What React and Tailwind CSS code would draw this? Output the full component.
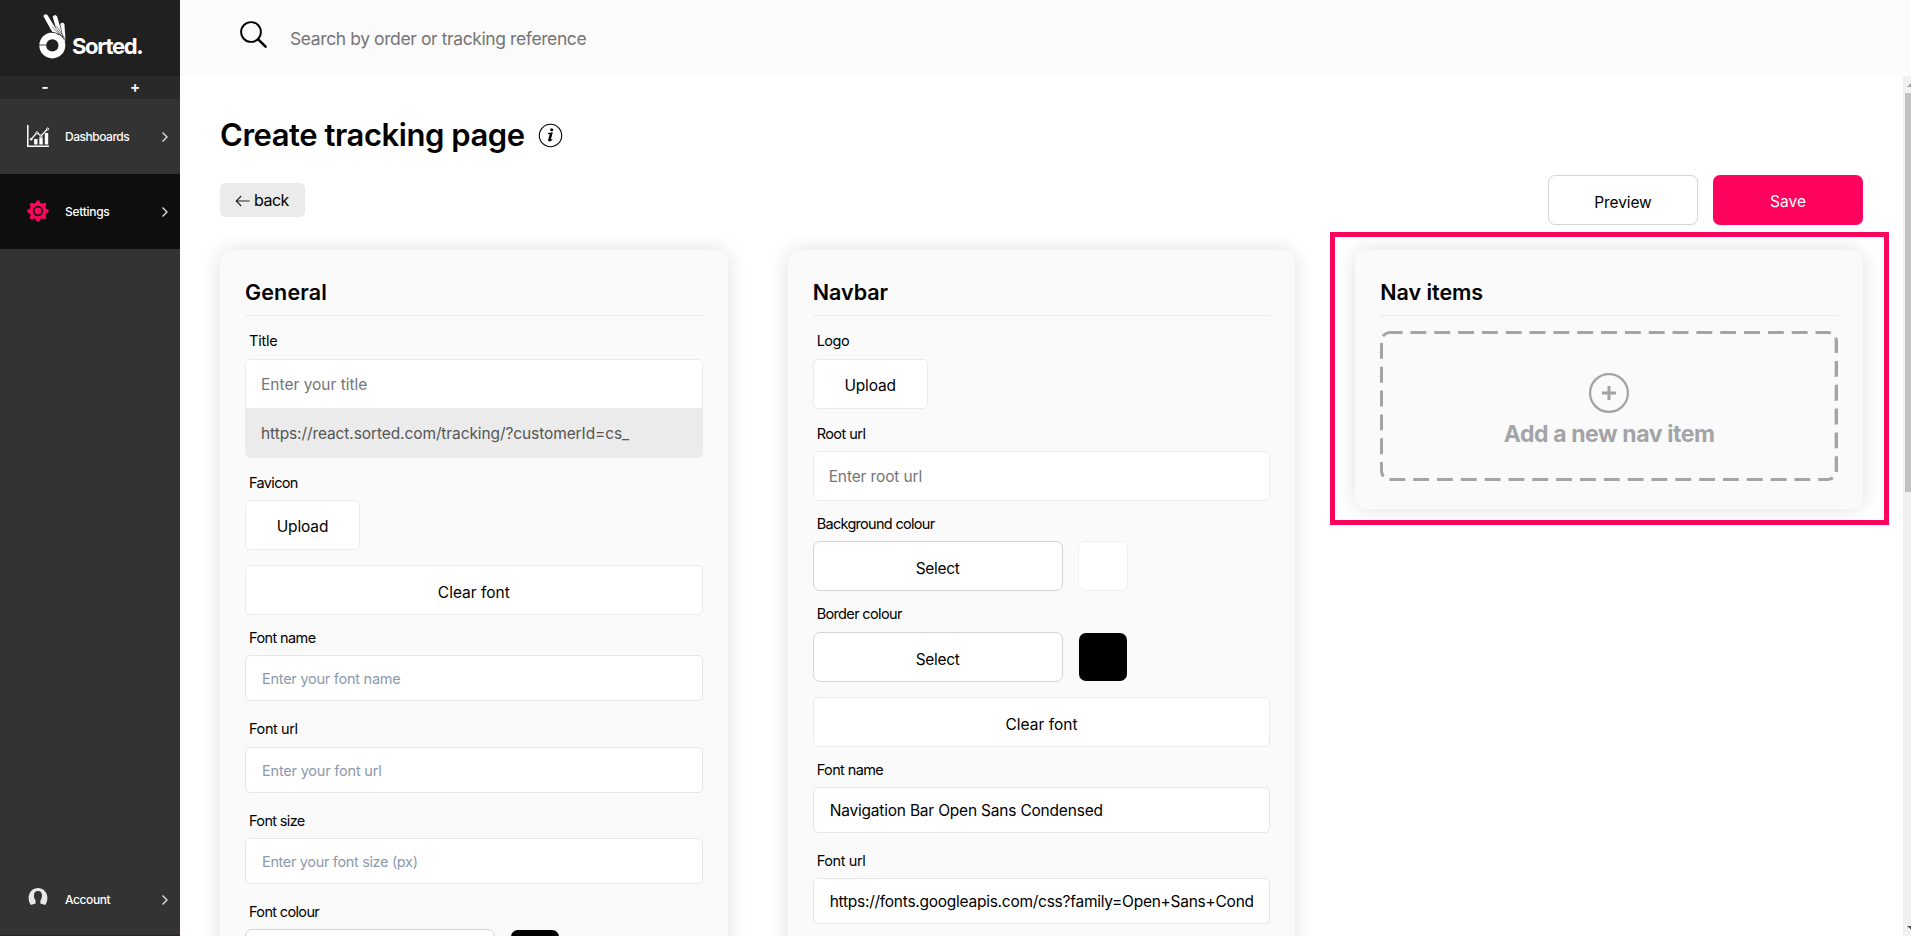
import React from "react";

function Chevron() {
  return (
    <svg className="ml-auto mr-[11px]" width="8" height="12" viewBox="0 0 8 12" fill="none" stroke="#e6e6e6" strokeWidth="1.3">
      <path d="M1.5 1.5 6 6 1.5 10.5" />
    </svg>
  );
}

function NavRow({ icon, label, className, textClass }) {
  return (
    <a className={`flex h-[75px] items-center pl-[27px] ${className}`}>
      <span className="flex w-[38px] items-center pb-[2px]">{icon}</span>
      <span className={`text-[12px] font-medium leading-[18px] text-white ${textClass}`}>{label}</span>
      <Chevron />
    </a>
  );
}

function Logo() {
  return (
    <div className="flex h-[76px] bg-[#202020] pl-[38px] pt-[13px]">
      <svg width="30" height="48" viewBox="0 0 30 48">
        <g fill="#fff">
          <path d="M5.6 3.5C5 1.6 8.2.2 9.6 2.2L16.5 13.5 22 21 14.8 19.4 12.4 15.8Z" />
          <path d="M14.8 4.2C15 1.8 18.6 1.6 19.2 3.8L22.2 14 24.6 24 18 15Z" />
          <path d="M22.4 11.5C22.6 9.2 26 9.2 26.4 11.3L27.4 25 27 30 24.6 22Z" />
        </g>
        <circle cx="14.3" cy="32.4" r="9.6" fill="none" stroke="#fff" strokeWidth="6.8" />
        <path d="M0 32H8M13 19.3 17.5 19.8 21 22" stroke="#202020" strokeWidth=".8" fill="none" />
        <path d="M14 13.5 27 27M18.5 13 27.2 26" stroke="#202020" strokeWidth=".6" fill="none" />
      </svg>
      <span className="ml-[4px] mt-[19px] whitespace-nowrap text-[22px] font-bold leading-[28px] tracking-[-1.3px] text-white">Sorted.</span>
    </div>
  );
}

function ChartIcon() {
  return (
    <svg width="22" height="22" viewBox="0 0 22 22" fill="none" stroke="#fff">
      <path d="M.8 0V21.2H22" strokeWidth="1.5" />
      <path d="M8.8 19.5V14M14 19.5V12.5M19.5 19.5V8" strokeWidth="3.4" />
      <path d="M4 14.5 10 7.5 14 11 20.5 4" strokeWidth="1.2" />
      <circle cx="4.2" cy="14.3" r="1" fill="#fff" strokeWidth=".6" />
      <circle cx="10" cy="7.8" r="1.1" fill="#333" strokeWidth=".9" />
      <circle cx="14" cy="11" r="1.1" fill="#333" strokeWidth=".9" />
      <circle cx="20.6" cy="4" r="1.1" fill="#333" strokeWidth=".9" />
    </svg>
  );
}

function GearIcon() {
  return (
    <svg width="22" height="22" viewBox="0 0 24 24">
      <g stroke="#ff045e" strokeWidth="4.4" strokeLinecap="round">
        <path d="M12 2.4V21.6M2.4 12H21.6M5.2 5.2 18.8 18.8M18.8 5.2 5.2 18.8" />
      </g>
      <circle cx="12" cy="12" r="7.4" fill="#0e0e0e" stroke="#ff045e" strokeWidth="3.6" />
      <circle cx="12" cy="12" r="3.7" fill="#ff045e" />
    </svg>
  );
}

function AccountIcon() {
  return (
    <svg className="mb-[3px] ml-px" width="20" height="18" viewBox="0 0 20 18">
      <path
        fill="#e8e8e8"
        d="M2.8 17C-.6 12 .2 6 3.4 2.8 7 -.9 13 -.9 16.6 2.8 19.8 6 20.6 12 17.2 17L12.4 15.6V12.6C15 9 14.8 3 10 3S5 9 7.6 12.6V15.6Z"
      />
    </svg>
  );
}

function Sidebar() {
  return (
    <aside className="flex w-[180px] shrink-0 flex-col border-b border-[#292226] bg-[#333]">
      <Logo />
      <div className="grid h-[23px] grid-cols-2 bg-[#292929] text-center text-[15px] font-bold leading-[21px] text-white">
        <span>-</span>
        <span>+</span>
      </div>
      <NavRow icon={<ChartIcon />} label="Dashboards" textClass="tracking-[-0.48px]" />
      <NavRow icon={<GearIcon />} label="Settings" className="bg-[#0e0e0e]" textClass="tracking-[-0.28px]" />
      <NavRow icon={<AccountIcon />} label="Account" className="mt-auto pt-[4px]" textClass="tracking-[-0.4px]" />
    </aside>
  );
}

function Card({ title, titleClass, className, children }) {
  return (
    <section className={`rounded-[12px] bg-[#fafafa] px-[25px] shadow-[0_0_20px_rgba(0,0,0,0.13)] ${className}`}>
      <h2 className={`h-[66px] border-b border-[#e9eaf2] pt-[27px] text-[21.5px] font-semibold leading-[30px] ${titleClass}`}>{title}</h2>
      {children}
    </section>
  );
}

function Label({ className, children }) {
  return <label className={`flex items-end pl-[4px] text-[14.5px] leading-[20px] ${className}`}>{children}</label>;
}

function FontInput({ className, ...props }) {
  return (
    <input
      readOnly
      className={`block h-[46px] w-full rounded-[5px] border border-[#e6e6e6] bg-white px-[16px] placeholder:text-[#8b9aac] ${className}`}
      {...props}
    />
  );
}

function Button({ className, children }) {
  return (
    <button className={`flex h-[50px] items-center justify-center border bg-white text-[15.5px] ${className}`}>{children}</button>
  );
}

function ColourRow({ swatch }) {
  return (
    <div className="flex items-center">
      <Button className="w-[250px] rounded-[7px] border-[#d4d4d4] pt-[5px] tracking-[-0.3px]">Select</Button>
      <span className={`rounded-[7px] ${swatch}`} />
    </div>
  );
}

export default function App() {
  return (
    <div className="flex h-[936px] w-[1911px] overflow-hidden bg-white font-['Inter',sans-serif] text-black">
      <Sidebar />
      <div className="flex min-w-0 flex-1 flex-col">
        <header className="flex h-[76px] shrink-0 items-center bg-[#fbfbfb] pl-[60px]">
          <svg className="mb-[6px]" width="28" height="28" viewBox="0 0 28 28" fill="none" stroke="#000">
            <circle cx="11" cy="11" r="9.9" strokeWidth="1.9" />
            <path d="M18.2 18.4 25.6 25.6" strokeWidth="2.6" strokeLinecap="round" />
          </svg>
          <input
            readOnly
            placeholder="Search by order or tracking reference"
            className="ml-[22px] w-[500px] pt-[2px] text-[17.5px] tracking-[-0.4px] placeholder:text-[#757575]"
          />
        </header>
        <div className="flex min-h-0 flex-1">
          <main className="min-w-0 flex-1 overflow-hidden px-[40px]">
            <div className="flex h-[107px] items-start pt-[38px]">
              <h1 className="text-[31px] font-semibold leading-[42px] tracking-[-0.45px]">Create tracking page</h1>
              <svg className="ml-[13px] mt-[9px]" width="25" height="25" viewBox="0 0 25 25">
                <circle cx="12.5" cy="12.5" r="11.2" fill="none" stroke="#000" strokeWidth="1.1" />
                <circle cx="13.7" cy="6.8" r="1.5" />
                <path d="M10 10.6 14 10 11.8 17.6Q11.8 18.4 14.2 16.4" fill="none" stroke="#000" strokeWidth="1.2" />
                <path d="M13 10.4 11 18" stroke="#000" strokeWidth="2.2" />
              </svg>
            </div>
            <div className="flex h-[67px] items-start justify-between">
              <button className="flex h-[34px] w-[85px] items-center rounded-[5px] bg-[#ebebeb] pl-[15px] text-[16px] leading-[20px] tracking-[-0.5px]">
                <svg className="mr-[4px] mt-[2px]" width="15" height="12" viewBox="0 0 15 12" fill="none" stroke="#222">
                  <path d="M14.5 6H1.2M6.2 1 1.2 6 6.2 11" strokeWidth="1.1" />
                </svg>
                back
              </button>
              <div className="-mt-[8px] flex gap-[15px]">
                <Button className="w-[150px] rounded-[7px] border-[#d4d4d4] pt-[5px] tracking-[-0.1px]">Preview</Button>
                <button className="h-[50px] w-[150px] rounded-[7px] bg-[#ff045e] pt-[4px] text-[15.5px] text-white">Save</button>
              </div>
            </div>
            <div className="grid grid-cols-3 items-start gap-[60px]">
              <Card title="General" className="h-[900px]" titleClass="tracking-[0.15px]">
                <Label className="h-[43px] pb-[8px] tracking-[-0.2px]">Title</Label>
                <div className="overflow-hidden rounded-[5px] border border-[#ebebeb]">
                  <input readOnly placeholder="Enter your title" className="block h-[48px] w-full bg-white px-[15px] text-[15.5px] placeholder:text-[#757575]" />
                  <div className="h-[49px] bg-[#ebebeb] px-[15px] text-[15.5px] leading-[51px] tracking-[-0.1px] text-[#555]">
                    https://react.sorted.com/tracking/?customerId=cs_
                  </div>
                </div>
                <Label className="h-[42px] pb-[7px] tracking-[-0.65px]">Favicon</Label>
                <Button className="w-[115px] rounded-[5px] border-[#ebebeb] pt-[4px] tracking-[-0.15px]">Upload</Button>
                <Button className="mt-[15px] w-full rounded-[5px] border-[#ebebeb] pt-[5px]">Clear font</Button>
                <Label className="h-[40px] pb-[7px] tracking-[-0.6px]">Font name</Label>
                <FontInput placeholder="Enter your font name" className="text-[14.5px] tracking-[-0.25px]" />
                <Label className="h-[46px] pb-[8px] tracking-[-0.4px]">Font url</Label>
                <FontInput placeholder="Enter your font url" className="text-[14.5px] tracking-[-0.2px]" />
                <Label className="h-[45px] pb-[7px] tracking-[-0.65px]">Font size</Label>
                <FontInput placeholder="Enter your font size (px)" className="text-[14.5px] tracking-[-0.34px]" />
                <Label className="h-[45px] pb-[7px] tracking-[-0.65px]">Font colour</Label>
                <ColourRow swatch="ml-[16px] h-[48px] w-[48px] bg-black" />
              </Card>

              <Card title="Navbar" className="h-[900px]">
                <Label className="h-[43px] pb-[8px] tracking-[-0.5px]">Logo</Label>
                <Button className="w-[115px] rounded-[5px] border-[#ebebeb] pt-[4px] tracking-[-0.15px]">Upload</Button>
                <Label className="h-[42px] pb-[7px] tracking-[-0.55px]">Root url</Label>
                <input readOnly placeholder="Enter root url" className="block h-[50px] w-full rounded-[5px] border border-[#ebebeb] bg-white px-[15px] text-[15.5px] tracking-[-0.12px] placeholder:text-[#757575]" />
                <Label className="h-[40px] pb-[7px] tracking-[-0.7px]">Background colour</Label>
                <ColourRow swatch="ml-[15px] h-[50px] w-[50px] border border-[#f0f0f0] bg-white" />
                <Label className="h-[41px] pb-[8px] tracking-[-0.65px]">Border colour</Label>
                <ColourRow swatch="ml-[16px] h-[48px] w-[48px] bg-black" />
                <Button className="mt-[15px] w-full rounded-[5px] border-[#ebebeb] pt-[5px]">Clear font</Button>
                <Label className="h-[40px] pb-[7px] tracking-[-0.6px]">Font name</Label>
                <FontInput value="Navigation Bar Open Sans Condensed" className="text-[15.5px] tracking-[-0.2px]" />
                <Label className="h-[45px] pb-[7px] tracking-[-0.4px]">Font url</Label>
                <FontInput value="https://fonts.googleapis.com/css?family=Open+Sans+Condensed" className="text-[15.5px] tracking-[-0.26px]" />
              </Card>

              <div className="-mb-[16px] -ml-[25.33px] -mr-[26px] -mt-[18px] border-[5px] border-[#ff045e] pb-[11px] pl-[20.33px] pr-[21px] pt-[13px]">
                <Card title="Nav items" className="h-[259px]" titleClass="tracking-[-0.05px]">
                  <button className="relative mt-[15px] flex h-[150px] w-full flex-col items-center overflow-hidden rounded-[10px] pt-[41px] text-[#a3a4a8]">
                    <svg className="absolute inset-0 h-full w-full" fill="none">
                      <rect width="100%" height="100%" rx="10" stroke="#a3a4a8" strokeWidth="6" strokeDasharray="15.9 7.93" strokeDashoffset="3.4" />
                    </svg>
                    <svg width="42" height="42" viewBox="0 0 42 42" fill="none" stroke="#a3a4a8">
                      <circle cx="21" cy="21" r="18.9" strokeWidth="2.3" />
                      <path d="M21 14V28M14 21H28" strokeWidth="3" />
                    </svg>
                    <span className="mt-[4px] text-[23px] font-bold leading-[32px] tracking-[-0.4px]">Add a new nav item</span>
                  </button>
                </Card>
              </div>
            </div>
          </main>
          <div className="flex w-[8px] shrink-0 flex-col items-end overflow-hidden bg-[#f1f1f1]">
            <svg width="4" height="17" viewBox="0 0 4 17">
              <path d="M0 11 4 7V11Z" fill="#a3a3a3" />
            </svg>
            <div className="h-[399px] w-[6px] bg-[#c1c1c1]" />
            <svg className="mt-auto" width="4" height="17" viewBox="0 0 4 17">
              <path d="M0 7H4V10.5Z" fill="#505050" />
            </svg>
          </div>
        </div>
      </div>
    </div>
  );
}
